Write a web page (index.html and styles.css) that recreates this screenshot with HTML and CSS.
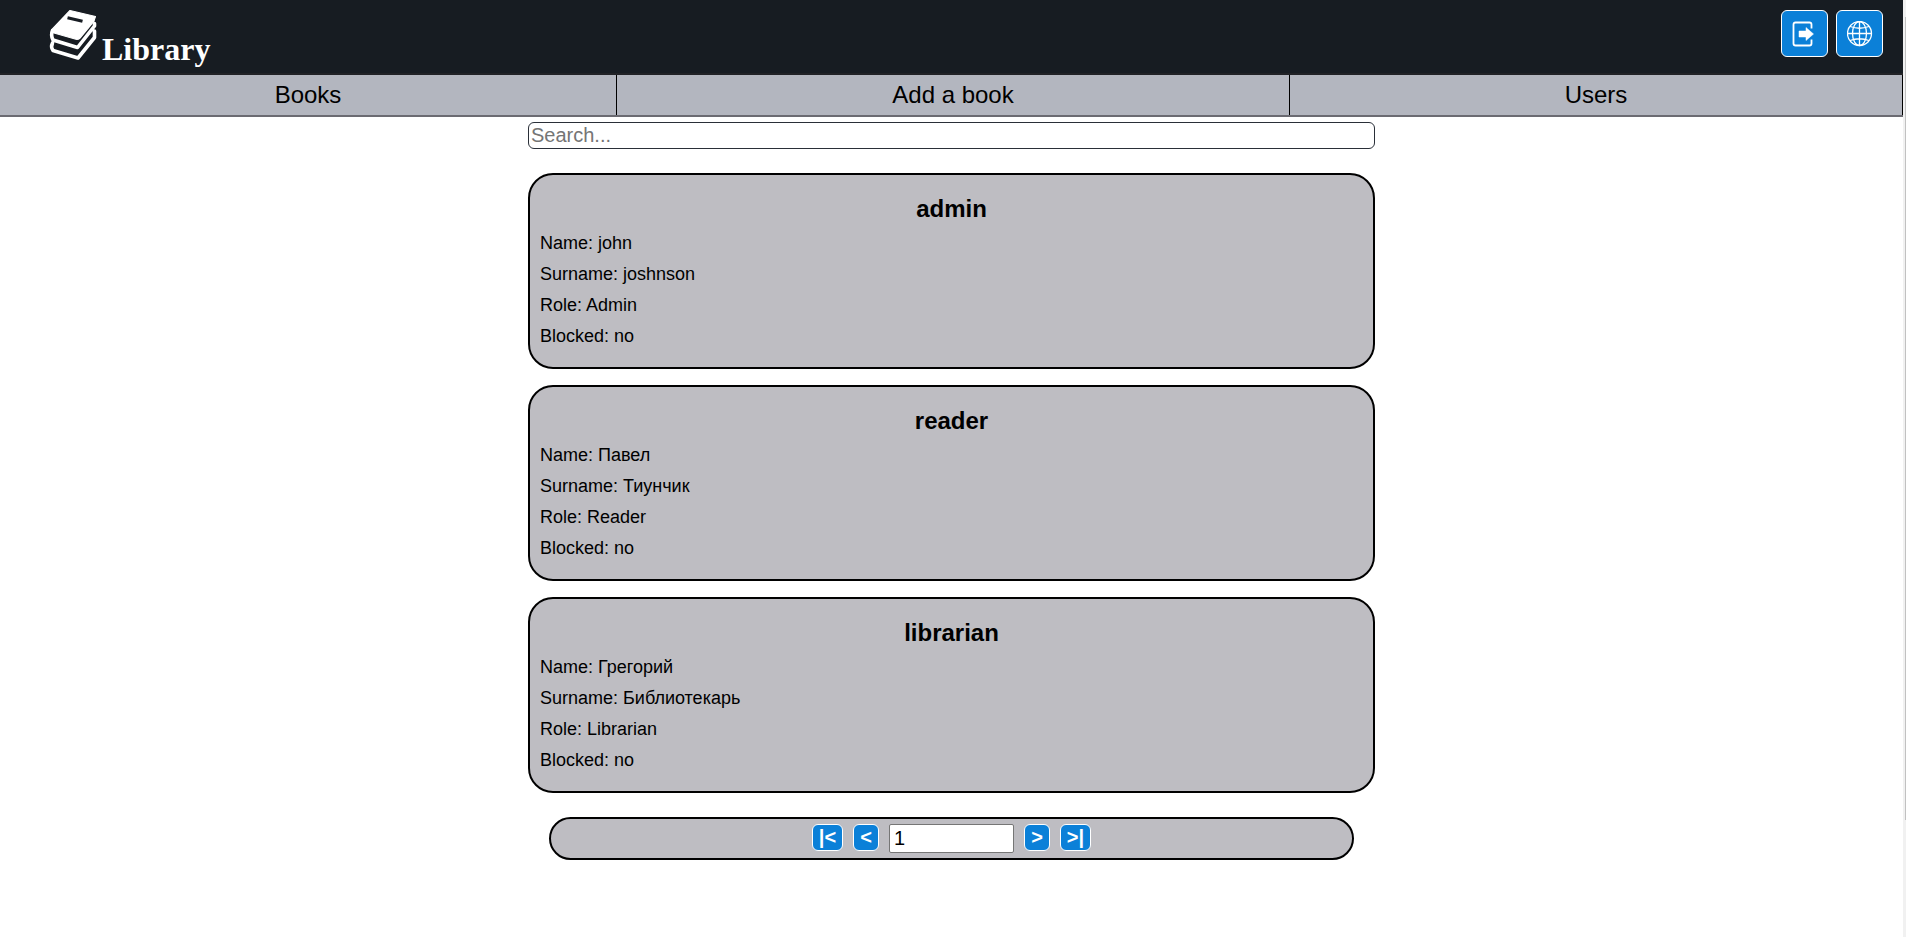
FILE: index.html
```html
<!DOCTYPE html>
<html lang="en">
<head>
<meta charset="utf-8">
<title>Library</title>
<link rel="stylesheet" href="styles.css">
</head>
<body>
<div class="page">
  <header class="header">
    <div class="brand">
      <svg class="logo" viewBox="0 0 56 60" aria-hidden="true">
        <path d="M25 5.500L50.500 11.500Q49.500 14 49 16L35 33Q33 35 30 34L9 28L6.500 25Z" fill="#fff" stroke="#fff" stroke-width="1.200" stroke-linejoin="round"/>
        <path d="M22.500 12.700L37.500 16.200" stroke="#171c22" stroke-width="3.200"/>
        <path d="M7.500 25.500Q5.500 30 8 35L32.500 42.500L49.500 21V18.500M7.500 38Q5.500 42 8 45.500L33 53L49.500 32.500V26" fill="none" stroke="#fff" stroke-width="3.600" stroke-linejoin="round" stroke-linecap="round"/>
      </svg>
      <span class="title">Library</span>
    </div>
    <div class="actions">
      <button class="action" aria-label="Log out">
        <svg viewBox="0 0 26 26"><path d="M19.500 7.500V3.500Q19.500 1.500 17.500 1.500H3.500Q1.500 1.500 1.500 3.500V22.500Q1.500 24.500 3.500 24.500H17.500Q19.500 24.500 19.500 22.500V18.500" fill="none" stroke="#fff" stroke-width="1.800"/><path d="M7 10H14V6.500L21.500 13L14 19.500V16H7Z" fill="#fff" stroke="#fff" stroke-width=".5"/></svg>
      </button>
      <button class="action" aria-label="Language">
        <svg viewBox="0 0 26 26" fill="none" stroke="#fff" stroke-width="1.300"><circle cx="12.500" cy="12.500" r="12"/><ellipse cx="12.500" cy="12.500" rx="7" ry="12"/><path d="M12.500 .5V24.500M.5 12.500H24.500M3 5.500Q12.500 9 22 5.500M3 19.500Q12.500 16 22 19.500"/></svg>
      </button>
    </div>
  </header>
  <nav class="nav">
    <a class="tab">Books</a><a class="tab">Add a book</a><a class="tab">Users</a>
  </nav>
  <main class="content">
    <input class="search" placeholder="Search...">
    <section class="card"><h2>admin</h2><p>Name: john</p><p>Surname: joshnson</p><p>Role: Admin</p><p>Blocked: no</p></section>
    <section class="card"><h2>reader</h2><p>Name: Павел</p><p>Surname: Тиунчик</p><p>Role: Reader</p><p>Blocked: no</p></section>
    <section class="card"><h2>librarian</h2><p>Name: Грегорий</p><p>Surname: Библиотекарь</p><p>Role: Librarian</p><p>Blocked: no</p></section>
    <div class="pager">
      <button class="step wide">|&lt;</button><button class="step">&lt;</button><input class="number" value="1"><button class="step">&gt;</button><button class="step wide">&gt;|</button>
    </div>
  </main>
</div>
<div class="track"><div class="thumb"></div></div>
</body>
</html>
```
FILE: styles.css
```css
* { box-sizing: border-box; }
body { margin: 0; height: 937px; overflow: hidden; display: flex; background: #fff; color: #000; font-family: "Liberation Sans", Arial, sans-serif; }
.page { flex: 1; }
.header { height: 75px; background: #171c22; border-bottom: 2px solid #212226; display: flex; justify-content: space-between; padding: 0 20px 0 45px; }
.brand { display: flex; align-items: flex-start; }
.logo { width: 56px; height: 60px; margin-top: 5px; }
.title { font: bold 32px/36px "Liberation Serif", "Times New Roman", serif; color: #fff; margin: 31px 0 0 1px; }
.actions { display: flex; gap: 8px; padding-top: 10px; }
.action { width: 47px; height: 47px; padding: 0; border: 1px solid #fff; border-radius: 6px; background: #0b80d8; display: flex; align-items: center; justify-content: center; }
.action svg { width: 26px; height: 26px; }
.nav { height: 42px; display: grid; grid-template-columns: 617px 673px 613px; background: #b3b6bf; border-bottom: 2px solid #6b6b72; }
.tab { font-size: 24px; line-height: 40px; text-align: center; border-right: 1px solid #000; }
.content { width: 847px; margin: 5px auto 0; display: flex; flex-direction: column; }
.search { height: 27px; padding: 1px 2px; border: 1px solid #2a2f38; border-radius: 6px; font: 20px "Liberation Sans", Arial, sans-serif; margin-bottom: 24px; }
.search::placeholder { color: #757575; }
.card { height: 196px; border: 2px solid #000; border-radius: 25px; background: #bebdc2; padding: 20px 10px 0; margin-bottom: 16px; }
.card h2 { margin: 0 0 5px; font-size: 24px; line-height: 28px; text-align: center; }
.card p { margin: 0; font-size: 18px; line-height: 31px; }
.pager { width: 805px; height: 43px; margin: 8px auto 0; border: 2px solid #000; border-radius: 22px; background: #bebdc2; display: flex; justify-content: center; gap: 10px; padding-top: 5px; }
.step { width: 26px; height: 27px; padding: 0 0 1px; border: 1px solid #fff; border-radius: 6px; background: #0b80d8; color: #fff; font: bold 20px/22px "Liberation Sans", Arial, sans-serif; }
.wide { width: 31px; }
.number { width: 125px; height: 29px; padding: 1px 4px; border: 1px solid #767676; border-radius: 2px; font: 20px "Liberation Sans", Arial, sans-serif; }
.track { width: 3px; height: 937px; background: #f1f1f1; padding: 17px 0 0 2px; }
.thumb { width: 1px; height: 803px; background: #c1c1c1; }
```
